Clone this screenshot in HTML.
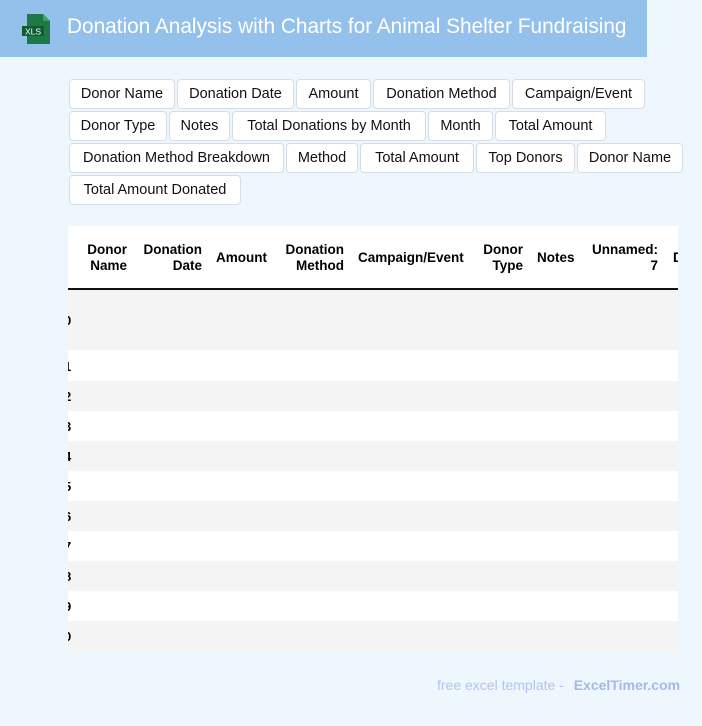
<!DOCTYPE html>
<html><head><meta charset="utf-8"><style>
*{margin:0;padding:0;box-sizing:border-box}
body{width:702px;height:726px;background:#eef6fe;font-family:"Liberation Sans",Arial,sans-serif;position:relative;overflow:hidden}
.hdr{position:absolute;left:0;top:0;width:647px;height:57px;background:#93c1eb}
.title{position:absolute;left:67px;top:15px;color:#fff;font-size:20.8px;white-space:nowrap}
.t{position:absolute;height:30px;background:#fff;border:1px solid #d6dde6;border-radius:4px;font-size:14.5px;color:#111;line-height:29px;text-align:center;white-space:nowrap}
.tbl{position:absolute;left:68px;top:226px;width:610px;height:425px;background:#fff;overflow:hidden}
.h{position:absolute;font-weight:bold;font-size:13.5px;color:#000;line-height:16px;white-space:nowrap}
.r{position:absolute;left:0;width:610px}
.g{background:#f4f4f4}
.i{position:absolute;left:-4px;font-weight:bold;font-size:13px;color:#000}
.foot{position:absolute;top:677px;left:437px;font-size:14px;color:#b3c4ef;white-space:nowrap}
.foot b{color:#a3b8ec;margin-left:6px}
</style></head><body>
<div class="hdr">
<svg style="position:absolute;left:20px;top:13px" width="32" height="32" viewBox="0 0 32 32">
<path d="M7 1h16l7 7v23H7z" fill="#1d7a46"/><path d="M23 1v7h7z" fill="#3fa06a"/>
<rect x="2" y="13" width="22" height="10" fill="#125c32"/>
<text x="13" y="21.5" fill="#fff" font-size="8.5" font-family="Liberation Sans" text-anchor="middle">XLS</text>
</svg>
<div class="title">Donation Analysis with Charts for Animal Shelter Fundraising</div>
</div>

<div class="t" style="left:69px;top:79px;width:106px">Donor Name</div>
<div class="t" style="left:177px;top:79px;width:117px">Donation Date</div>
<div class="t" style="left:296px;top:79px;width:75px">Amount</div>
<div class="t" style="left:373px;top:79px;width:137px">Donation Method</div>
<div class="t" style="left:512px;top:79px;width:133px">Campaign/Event</div>

<div class="t" style="left:69px;top:111px;width:98px">Donor Type</div>
<div class="t" style="left:169px;top:111px;width:61px">Notes</div>
<div class="t" style="left:232px;top:111px;width:194px">Total Donations by Month</div>
<div class="t" style="left:428px;top:111px;width:65px">Month</div>
<div class="t" style="left:495px;top:111px;width:111px">Total Amount</div>

<div class="t" style="left:69px;top:143px;width:215px">Donation Method Breakdown</div>
<div class="t" style="left:286px;top:143px;width:72px">Method</div>
<div class="t" style="left:360px;top:143px;width:114px">Total Amount</div>
<div class="t" style="left:476px;top:143px;width:99px">Top Donors</div>
<div class="t" style="left:577px;top:143px;width:106px">Donor Name</div>

<div class="t" style="left:69px;top:175px;width:172px">Total Amount Donated</div>

<div class="tbl">
<div class="h" style="right:551px;top:16px;text-align:right">Donor<br>Name</div>
<div class="h" style="right:476px;top:16px;text-align:right">Donation<br>Date</div>
<div class="h" style="left:148px;top:24px">Amount</div>
<div class="h" style="right:334px;top:16px;text-align:right">Donation<br>Method</div>
<div class="h" style="left:290px;top:24px">Campaign/Event</div>
<div class="h" style="right:155px;top:16px;text-align:right">Donor<br>Type</div>
<div class="h" style="left:469px;top:24px">Notes</div>
<div class="h" style="right:20px;top:16px;text-align:right">Unnamed:<br>7</div>
<div class="h" style="left:605px;top:24px">D</div>
<div class="r" style="top:62px;height:2px;background:#111"></div>
<div class="r g" style="top:64px;height:60px"></div><div class="i" style="top:87px">0</div>
<div class="i" style="top:133px">1</div>
<div class="r g" style="top:155px;height:30px"></div><div class="i" style="top:163px">2</div>
<div class="i" style="top:193px">3</div>
<div class="r g" style="top:215px;height:30px"></div><div class="i" style="top:223px">4</div>
<div class="i" style="top:253px">5</div>
<div class="r g" style="top:275px;height:30px"></div><div class="i" style="top:283px">6</div>
<div class="i" style="top:313px">7</div>
<div class="r g" style="top:335px;height:30px"></div><div class="i" style="top:343px">8</div>
<div class="i" style="top:373px">9</div>
<div class="r g" style="top:395px;height:30px"></div><div class="i" style="top:403px">0</div>
</div>

<div class="foot">free excel template - <b>ExcelTimer.com</b></div>
</body></html>
